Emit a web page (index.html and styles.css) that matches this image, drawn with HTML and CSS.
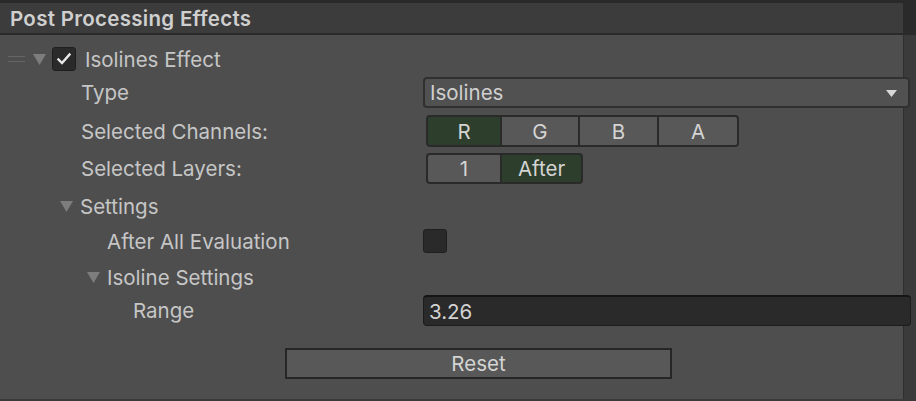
FILE: index.html
```html
<!DOCTYPE html>
<html>
<head>
<meta charset="utf-8">
<link rel="stylesheet" href="styles.css">
</head>
<body>
<div class="panel">
  <div class="header"><span class="title">Post Processing Effects</span></div>
  <div class="content">
    <div class="row effect-row">
      <span class="handle"></span>
      <svg class="fold fold-effect" width="13" height="11" viewBox="0 0 13 11"><polygon points="0,0 13,0 6.5,11" fill="#7d7d7d"/></svg>
      <span class="check on"><svg width="16" height="14" viewBox="0 0 16 14"><polyline points="2.5,7.5 6,11 13.5,2.5" fill="none" stroke="#e8e8e8" stroke-width="2.4" stroke-linecap="square"/></svg></span>
      <span class="label effect-label">Isolines Effect</span>
    </div>
    <div class="row r-type">
      <span class="label ind1">Type</span>
      <div class="field dropdown"><span>Isolines</span>
        <svg class="arrow" width="11" height="7" viewBox="0 0 11 7"><polygon points="0,0 11,0 5.5,7" fill="#d8d8d8"/></svg>
      </div>
    </div>
    <div class="row r-chan">
      <span class="label ind1">Selected Channels:</span>
      <div class="field seg">
        <span class="btn sel w76">R</span><span class="btn w78">G</span><span class="btn w79">B</span><span class="btn w81">A</span>
      </div>
    </div>
    <div class="row r-layers">
      <span class="label ind1">Selected Layers:</span>
      <div class="field seg">
        <span class="btn w76">1</span><span class="btn sel w81">After</span>
      </div>
    </div>
    <div class="row r-settings">
      <svg class="fold fold-settings" width="13" height="11" viewBox="0 0 13 11"><polygon points="0,0 13,0 6.5,11" fill="#7d7d7d"/></svg>
      <span class="label">Settings</span>
    </div>
    <div class="row r-after">
      <span class="label ind2">After All Evaluation</span>
      <div class="field"><span class="check off"></span></div>
    </div>
    <div class="row r-iso">
      <svg class="fold fold-iso" width="13" height="11" viewBox="0 0 13 11"><polygon points="0,0 13,0 6.5,11" fill="#7d7d7d"/></svg>
      <span class="label">Isoline Settings</span>
    </div>
    <div class="row r-range">
      <span class="label ind3">Range</span>
      <div class="field textfield"><span>3.26</span></div>
    </div>
    <div class="reset-wrap"><span class="reset">Reset</span></div>
  </div>
</div>
</body>
</html>
```
FILE: styles.css
```css
html, body {
  margin: 0;
  padding: 0;
  background: #3c3c3c;
}
body {
  width: 916px;
  height: 401px;
  overflow: hidden;
  font-family: Inter, "Noto Sans", sans-serif;
  color: #c6c6c6;
}
.panel {
  width: 916px;
  height: 401px;
  display: flex;
  flex-direction: column;
  background: linear-gradient(to right, #4e4e4e 0 903px, #2f2f2f 903px 904px, #3b3b3b 904px);
}
.header {
  height: 30px;
  border-top: 3px solid #2a2a2a;
  border-bottom: 2px solid #2a2a2a;
  background: linear-gradient(to right, #3c3c3c 0 903px, #2a2a2a 903px);
  display: flex;
  align-items: center;
  padding-left: 10px;
}
.title {
  font-weight: 600;
  font-size: 20.5px;
  color: #cfcfcf;
  letter-spacing: 0.3px;
}
.content {
  flex: 1;
  padding-top: 12px;
  border-bottom: 2px solid #3a3a3a;
  display: flex;
  flex-direction: column;
}
.row {
  display: flex;
  align-items: center;
  position: relative;
}
.label {
  font-size: 20.5px;
  color: #c6c6c6;
  white-space: nowrap;
}
.ind1 { width: 342px; padding-left: 81px; }
.ind2 { width: 316px; padding-left: 107px; }
.ind3 { width: 290px; padding-left: 133px; }

.effect-row { height: 24px; }
.handle {
  width: 17px;
  height: 4px;
  margin-left: 8px;
  border-top: 1px solid #666;
  border-bottom: 1px solid #666;
}
.fold-effect { margin-left: 8px; margin-top: 1px; }
.check {
  width: 22px;
  height: 22px;
  border: 1px solid #1f1f1f;
  border-radius: 3px;
  background: #2a2a2a;
  display: flex;
  align-items: center;
  justify-content: center;
  box-sizing: content-box;
}
.check.on { margin-left: 6px; }
.effect-label { margin-left: 9px; }

.r-type { height: 31px; margin-top: 6px; }
.r-chan { height: 32px; margin-top: 7px; }
.r-layers { height: 31px; margin-top: 6px; }
.r-settings { height: 32px; margin-top: 6px; }
.r-after { height: 24px; margin-top: 7px; }
.r-iso { height: 32px; margin-top: 8px; }
.r-range { height: 31px; margin-top: 2px; }

.field {
  height: 100%;
  display: flex;
  align-items: center;
}
.dropdown {
  width: 487px;
  box-sizing: border-box;
  background: #515151;
  border: 2px solid #303030;
  border-radius: 4px;
  padding-left: 5px;
  font-size: 20.5px;
  color: #d0d0d0;
  justify-content: space-between;
  padding-right: 11px;
}
.arrow { margin-top: 1px; }
.seg {
  margin-left: 3px;
  box-sizing: border-box;
  border: 2px solid #2a2a2a;
  border-radius: 4px;
  overflow: hidden;
  background: #2a2a2a;
  gap: 2px;
  height: 32px;
}
.r-layers .seg { height: 31px; }
.btn {
  height: 100%;
  background: #585858;
  display: flex;
  align-items: center;
  justify-content: center;
  font-size: 20.5px;
  color: #d4d4d4;
}
.btn.sel { background: #2d3e2c; }
.w76 { width: 72px; }
.w78 { width: 76px; }
.w79 { width: 77px; }
.w81 { width: 78px; }
.r-layers .w81 { width: 79px; }

.fold-settings { margin-left: 60px; margin-right: 7px; }
.fold-iso { margin-left: 87px; margin-right: 7px; }

.textfield {
  width: 488px;
  box-sizing: border-box;
  background: #2a2a2a;
  border: 1px solid #1c1c1c;
  border-top: 2px solid #151515;
  border-radius: 4px;
  padding-left: 5px;
  font-size: 20.5px;
  color: #d2d2d2;
}
.reset-wrap {
  margin-top: 22px;
  padding-left: 285px;
  display: flex;
}
.reset {
  width: 387px;
  height: 31px;
  box-sizing: border-box;
  border: 2px solid #262626;
  background: #585858;
  display: flex;
  align-items: center;
  justify-content: center;
  font-size: 20.5px;
  color: #d4d4d4;
}
```
